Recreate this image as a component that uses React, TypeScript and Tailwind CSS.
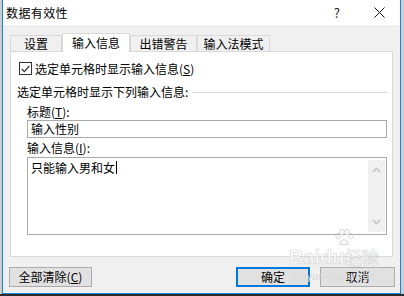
import React from "react";

const font = { fontFamily: '"Noto Sans CJK SC", "Microsoft YaHei", sans-serif' };

const tabs = [
  { label: "设置", w: "w-[52px]" },
  { label: "输入信息", w: "w-[68px]" },
  { label: "出错警告", w: "w-[67px]" },
  { label: "输入法模式", w: "w-[73px]" },
];

function Tab({ label, w, active }: { label: string; w: string; active: boolean }) {
  if (active) {
    return (
      <div
        className={`${w} relative z-10 -mb-px h-[19px] self-end border border-b-0 border-[#d9d9d9] bg-white pt-[3px] text-center text-[12px] leading-[12px] text-black`}
      >
        {label}
      </div>
    );
  }
  return (
    <div
      className={`${w} h-[16px] self-end border border-b-0 border-[#d9d9d9] bg-[#f0f0f0] pt-[2px] text-center text-[12px] leading-[12px] text-black`}
    >
      {label}
    </div>
  );
}

function Chevron({ up }: { up?: boolean }) {
  return (
    <svg width="9" height="6" viewBox="0 0 9 6" className="block">
      <path
        d={up ? "M1 5 L4.5 1.5 L8 5" : "M1 1 L4.5 4.5 L8 1"}
        stroke="#c4c4c4"
        strokeWidth="1.6"
        fill="none"
      />
    </svg>
  );
}

export default function App() {
  return (
    <div className="h-[296px] w-[404px] overflow-hidden bg-[#c9ced4]" style={font}>
      {/* DIALOG */}
      <div className="relative ml-[2px] flex h-[294px] w-[399px] flex-col border border-t-0 border-[#1883d7] bg-[#f0f0f0]">
        {/* TITLE BAR */}
        <div className="flex h-[25px] items-center bg-white pl-[3px]">
          <span className="text-[12px] leading-[12px] tracking-[0.4px] text-[#000]">数据有效性</span>
          <span className="ml-auto mr-[34px] text-[13px] leading-[13px] text-[#222]">?</span>
          <svg width="11" height="11" viewBox="0 0 11 11" className="mr-[15px]">
            <path d="M0.5 0.5 L10.5 10.5 M10.5 0.5 L0.5 10.5" stroke="#111" strokeWidth="1" />
          </svg>
        </div>

        {/* TABS */}
        <div className="mt-[7px] flex h-[19px] pl-[7px]">
          {tabs.map((t) => (
            <Tab key={t.label} label={t.label} w={t.w} active={t.label === "输入信息"} />
          ))}
        </div>

        {/* PANEL */}
        <div className="ml-[7px] flex h-[206px] w-[383px] flex-col border border-[#d9d9d9] bg-white pt-[10px]">
          <div className="flex h-[13px] items-center pl-[8px]">
            <div className="flex h-[13px] w-[13px] items-center justify-center border border-[#333] bg-white">
              <svg width="9" height="8" viewBox="0 0 9 8">
                <path d="M0.8 4 L3.3 6.6 L8.3 1" stroke="#333" strokeWidth="1.3" fill="none" />
              </svg>
            </div>
            <span className="ml-[3px] text-[12px] leading-[12px]">
              选定单元格时显示输入信息(<span className="underline">S</span>)
            </span>
          </div>

          <div className="mt-[11px] flex h-[12px] items-center pl-[6px] pr-[5px]">
            <span className="text-[12px] leading-[12px]">选定单元格时显示下列输入信息:</span>
            <div className="ml-[4px] h-px flex-1 bg-[#d9d9d9]" />
          </div>

          <div className="mt-[8px] h-[12px] pl-[16px] text-[12px] leading-[12px]">
            标题(<span className="underline">T</span>):
          </div>
          <div className="ml-[16px] mt-[2px] flex h-[18px] w-[360px] items-center border border-[#a9a9a9] bg-white pl-[3px] text-[12px] leading-[12px]">
            输入性别
          </div>

          <div className="mt-[4px] h-[12px] pl-[16px] text-[12px] leading-[12px]">
            输入信息(<span className="underline">I</span>):
          </div>
          <div className="ml-[16px] mt-[3px] flex h-[78px] w-[360px] border border-[#a9a9a9] bg-white">
            <div className="flex flex-1 items-start pl-[3px] pt-[3px]">
              <span className="text-[12px] leading-[13px]">只能输入男和女</span>
              <span className="ml-px h-[13px] w-px bg-black" />
            </div>
            <div className="my-[2px] mr-px flex w-[17px] flex-col items-center justify-between bg-[#f0f0f0] py-[7px]">
              <Chevron up />
              <Chevron />
            </div>
          </div>
        </div>

        {/* BUTTONS */}
        <div className="mt-[10px] flex h-[20px] pl-[6px] pr-[5px]">
          <div className="flex w-[83px] items-center justify-center border border-[#adadad] bg-[#e1e1e1] text-[12px] leading-[12px]">
            全部清除(<span className="underline">C</span>)
          </div>
          <div className="ml-auto flex w-[74px] items-center justify-center border-2 border-[#0078d7] bg-[#e1e1e1] text-[12px] leading-[12px]">
            确定
          </div>
          <div className="ml-[10px] flex w-[75px] items-center justify-center border border-[#adadad] bg-[#e1e1e1] text-[12px] leading-[12px]">
            取消
          </div>
        </div>

        {/* WATERMARK */}
        <div className="pointer-events-none absolute left-[286px] top-[229px] flex flex-col items-center">
          <svg width="20" height="18" viewBox="0 0 20 18" className="ml-[20px]">
            <g fill="none" stroke="#d6d6d6" strokeWidth="1">
              <ellipse cx="4" cy="7" rx="2.2" ry="2.8" />
              <ellipse cx="8" cy="3" rx="2.2" ry="2.8" />
              <ellipse cx="13" cy="3" rx="2.2" ry="2.8" />
              <ellipse cx="17" cy="7" rx="2.2" ry="2.8" />
              <path d="M5 15 Q10 6 15 15 Q10 17 5 15Z" />
            </g>
          </svg>
          <div
            className="text-[20px] font-bold leading-[20px] text-white/60"
            style={{ fontFamily: '"Liberation Sans", sans-serif', WebkitTextStroke: "0.6px #d4d4d4" }}
          >
            Baidu<span style={font} className="text-[17px]">经验</span>
          </div>
          <div
            className="mt-[4px] text-[11px] leading-[11px] text-[#dcdcdc]"
            style={{ fontFamily: '"Liberation Sans", sans-serif' }}
          >
            jingyan.baidu.com
          </div>
        </div>
      </div>
      <div className="h-[2px] bg-[#2b2b2b]" />
    </div>
  );
}
